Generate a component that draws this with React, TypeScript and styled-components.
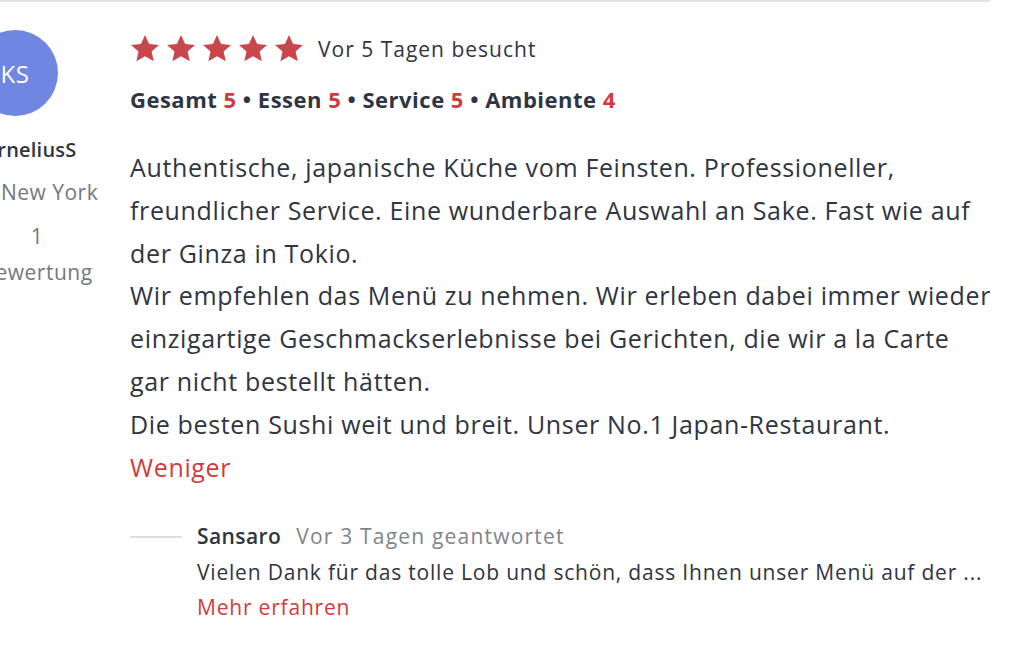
import React from "react";
import styled, { createGlobalStyle } from "styled-components";

const Global = createGlobalStyle`
  html, body { margin: 0; padding: 0; background: #fff; }
  body { font-family: "Open Sans", Lato, sans-serif; color: #2f3542; overflow: hidden; }
`;

const Card = styled.div`
  width: 990px;
  height: 647px;
  border-top: 2px solid #e2e2e8;
  display: flex;
  overflow: hidden;
`;

const LeftCol = styled.div`
  flex: 0 0 150px;
  margin-left: -38px;
  padding-top: 28px;
  display: flex;
  flex-direction: column;
  align-items: center;
  text-align: center;
  white-space: nowrap;
`;

const Avatar = styled.div`
  width: 86px;
  height: 86px;
  border-radius: 50%;
  background: #6f87e1;
  color: #fff;
  font-size: 24px;
  letter-spacing: 0.5px;
  display: flex;
  align-items: center;
  justify-content: center;
  align-self: flex-start;
  margin-left: 10px;
  margin-bottom: 14px;
`;

const UserName = styled.div`
  align-self: flex-start;
  margin-left: 10px;
  font-size: 20px;
  font-weight: 600;
  letter-spacing: 0.2px;
  color: #2f3542;
  line-height: 40px;
`;

const UserMeta = styled.div<{ $gap: number; $lh: number }>`
  font-size: 21px;
  letter-spacing: 0.5px;
  color: #737882;
  line-height: ${(p) => p.$lh}px;
  margin-top: ${(p) => p.$gap}px;
`;

const MainCol = styled.div`
  flex: 1;
  padding-left: 18px;
  padding-top: 30px;
`;

const StarRow = styled.div`
  display: flex;
  align-items: center;
  height: 34px;
`;

const Stars = styled.div`
  display: flex;
  gap: 6px;
  margin-right: 14px;
  margin-top: -2px;
`;

const Visited = styled.span`
  font-size: 21px;
  letter-spacing: 1px;
  color: #2f3542;
`;

const Ratings = styled.div`
  margin-top: 18px;
  font-size: 22px;
  letter-spacing: 0.5px;
  font-weight: 700;
  color: #2f3542;
`;

const Score = styled.span`
  color: #d13b40;
`;

const Body = styled.div`
  margin-top: 32px;
  font-size: 25px;
  letter-spacing: 0.65px;
  line-height: 42.8px;
  color: #2f3542;
  white-space: nowrap;
`;

const RedLink = styled.div<{ $size: number; $lh: number }>`
  color: #d13b40;
  font-size: ${(p) => p.$size}px;
  line-height: ${(p) => p.$lh}px;
`;

const Reply = styled.div`
  margin-top: 31px;
  display: flex;
  align-items: flex-start;
`;

const ReplyLine = styled.div`
  width: 52px;
  height: 2px;
  background: #dcdde1;
  margin-top: 17px;
  margin-right: 15px;
`;

const ReplyBody = styled.div`
  flex: 1;
  font-size: 21px;
  letter-spacing: 0.8px;
  line-height: 35.5px;
  white-space: nowrap;
`;

const ReplyAuthor = styled.span`
  font-weight: 600;
  letter-spacing: 0.4px;
  color: #2f3542;
  margin-right: 15px;
`;

const ReplyDate = styled.span`
  color: #80848c;
  letter-spacing: 1.2px;
`;

const Star = () => (
  <svg width="30" height="29" viewBox="0 0 24 23">
    <path
      d="M12 0.6l3.3 7.2 7.9 0.8-5.9 5.3 1.7 7.8L12 17.7l-6.9 4 1.7-7.8L0.8 8.6l7.9-0.8z"
      fill="#c9474c"
    />
  </svg>
);

export default function App() {
  return (
    <>
      <Global />
      <Card>
        <LeftCol>
          <Avatar>KS</Avatar>
          <UserName>KorneliusS</UserName>
          <UserMeta $gap={2} $lh={40}>in New York</UserMeta>
          <UserMeta $gap={6} $lh={36}>1</UserMeta>
          <UserMeta $gap={0} $lh={36}>Bewertung</UserMeta>
        </LeftCol>
        <MainCol>
          <StarRow>
            <Stars>
              {[0, 1, 2, 3, 4].map((i) => (
                <Star key={i} />
              ))}
            </Stars>
            <Visited>Vor 5 Tagen besucht</Visited>
          </StarRow>
          <Ratings>
            Gesamt <Score>5</Score> • Essen <Score>5</Score> • Service <Score>5</Score> • Ambiente{" "}
            <Score>4</Score>
          </Ratings>
          <Body>
            Authentische, japanische Küche vom Feinsten. Professioneller,
            <br />
            freundlicher Service. Eine wunderbare Auswahl an Sake. Fast wie auf
            <br />
            der Ginza in Tokio.
            <br />
            Wir empfehlen das Menü zu nehmen. Wir erleben dabei immer wieder
            <br />
            einzigartige Geschmackserlebnisse bei Gerichten, die wir a la Carte
            <br />
            gar nicht bestellt hätten.
            <br />
            Die besten Sushi weit und breit. Unser No.1 Japan-Restaurant.
            <RedLink $size={25} $lh={42.8}>Weniger</RedLink>
          </Body>
          <Reply>
            <ReplyLine />
            <ReplyBody>
              <div>
                <ReplyAuthor>Sansaro</ReplyAuthor>
                <ReplyDate>Vor 3 Tagen geantwortet</ReplyDate>
              </div>
              <div>Vielen Dank für das tolle Lob und schön, dass Ihnen unser Menü auf der ...</div>
              <RedLink $size={21} $lh={35.5}>Mehr erfahren</RedLink>
            </ReplyBody>
          </Reply>
        </MainCol>
      </Card>
    </>
  );
}
